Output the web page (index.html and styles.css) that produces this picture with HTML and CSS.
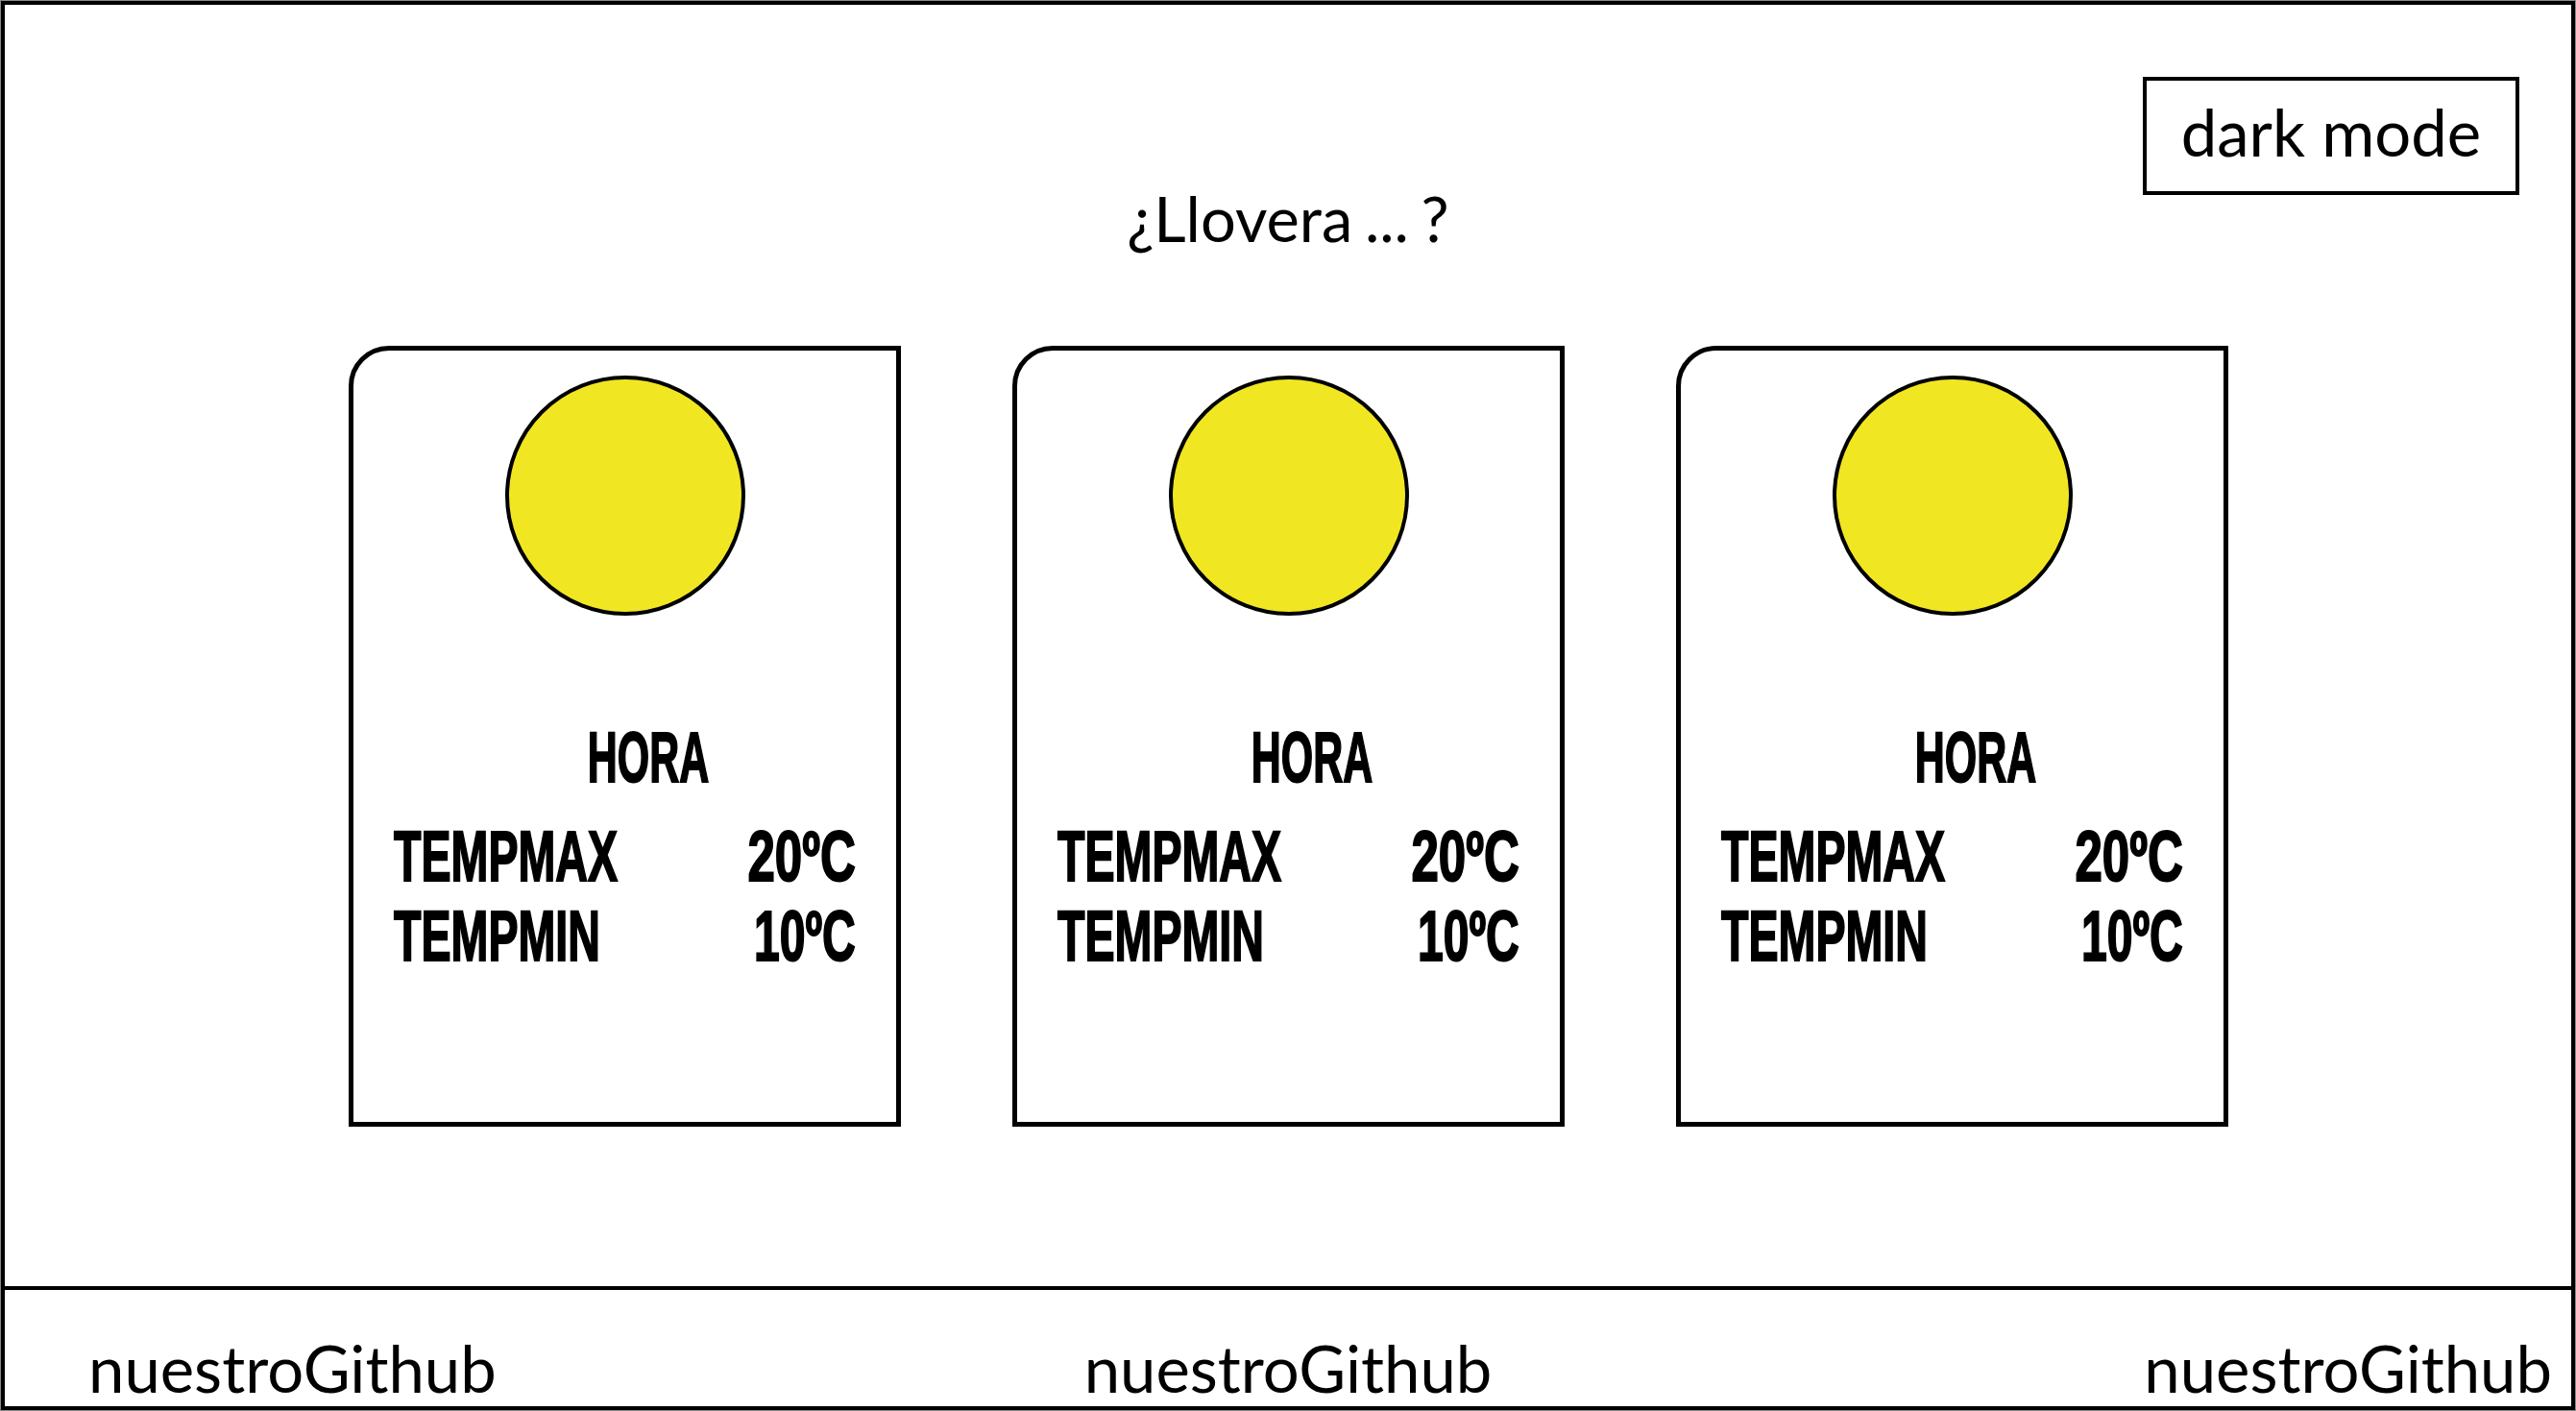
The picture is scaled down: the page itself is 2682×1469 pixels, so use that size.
FILE: index.html
```html
<!DOCTYPE html>
<html lang="es">
<head>
<meta charset="utf-8">
<title>¿Llovera ... ?</title>
<link rel="stylesheet" href="styles.css">
</head>
<body>
<div class="page">
  <main class="main">
    <header class="header">
      <h1 class="title">¿Llovera ... ?</h1>
      <button class="mode" type="button">dark mode</button>
    </header>
    <section class="cards">
      <article class="card">
        <div class="sun"></div>
        <div class="hora"><span class="cond cond-center">HORA</span></div>
        <div class="row row-max"><span class="cond cond-left">TEMPMAX</span><span class="cond cond-right">20ºC</span></div>
        <div class="row"><span class="cond cond-left">TEMPMIN</span><span class="cond cond-right cond-tight">10ºC</span></div>
      </article>
      <article class="card">
        <div class="sun"></div>
        <div class="hora"><span class="cond cond-center">HORA</span></div>
        <div class="row row-max"><span class="cond cond-left">TEMPMAX</span><span class="cond cond-right">20ºC</span></div>
        <div class="row"><span class="cond cond-left">TEMPMIN</span><span class="cond cond-right cond-tight">10ºC</span></div>
      </article>
      <article class="card">
        <div class="sun"></div>
        <div class="hora"><span class="cond cond-center">HORA</span></div>
        <div class="row row-max"><span class="cond cond-left">TEMPMAX</span><span class="cond cond-right">20ºC</span></div>
        <div class="row"><span class="cond cond-left">TEMPMIN</span><span class="cond cond-right cond-tight">10ºC</span></div>
      </article>
    </section>
  </main>
  <footer class="footer">
    <span class="gh gh-start">nuestroGithub</span>
    <span class="gh">nuestroGithub</span>
    <span class="gh gh-end">nuestroGithub</span>
  </footer>
</div>
</body>
</html>
```
FILE: styles.css
```css
* { box-sizing: border-box; }
html, body { margin: 0; padding: 0; background: #fff; }
body { color: #000; font-family: Lato, "Open Sans", sans-serif; overflow: hidden; padding: 1px; }
.page {
  width: 2680px;
  height: 1467px;
  border: 4px solid #000;
  box-shadow: 0 0 0 1px #888;
  display: flex;
  flex-direction: column;
}
.main { flex: 1; display: flex; flex-direction: column; border-bottom: 4px solid #000; }
.header {
  height: 355px;
  display: grid;
  grid-template-columns: 1fr auto 1fr;
  padding-top: 75px;
}
.title {
  grid-column: 2;
  margin: 107px 0 0;
  height: 80px;
  font-size: 65px;
  line-height: 80px;
  font-weight: 400;
  word-spacing: -4px;
  white-space: nowrap;
}
.mode {
  grid-column: 3;
  justify-self: end;
  align-self: start;
  width: 392px;
  height: 123px;
  margin-right: 54px;
  border: 4px solid #000;
  background: #fff;
  color: #000;
  padding: 0 0 8px;
  font: 400 67px/1 Lato, "Open Sans", sans-serif;
}
.cards { display: flex; gap: 116px; padding-left: 358px; }
.card {
  width: 575px;
  height: 813px;
  border: 5px solid #000;
  border-top-left-radius: 42px;
  padding: 26px 42px 0;
}
.sun {
  width: 250px;
  height: 250px;
  margin: 0 auto;
  border: 4px solid #000;
  border-radius: 50%;
  background: #f1e622;
}
.hora { display: flex; justify-content: center; padding-left: 48px; margin-top: 112px; height: 72px; }
.row { display: grid; grid-template-columns: minmax(0, 1fr) minmax(0, 1fr); height: 83px; }
.row-max { margin-top: 31px; }
.cond {
  display: inline-block;
  font: 700 74px/72px "Liberation Sans Narrow", "Liberation Sans", sans-serif;
  white-space: nowrap;
  -webkit-text-stroke: 2px #000;
}
.cond-left { justify-self: start; transform-origin: left center; transform: scaleX(.63); }
.cond-right { justify-self: end; transform-origin: right center; transform: scaleX(.69); }
.cond-tight { transform: scaleX(.65); }
.cond-center { transform-origin: center; transform: scaleX(.58); }
.footer {
  height: 121px;
  display: grid;
  grid-template-columns: 1fr auto 1fr;
  align-items: end;
  padding: 0 20px;
}
.gh { font-size: 67px; line-height: 80px; }
.gh-start { padding-left: 67px; }
.gh-end { justify-self: end; }
```
